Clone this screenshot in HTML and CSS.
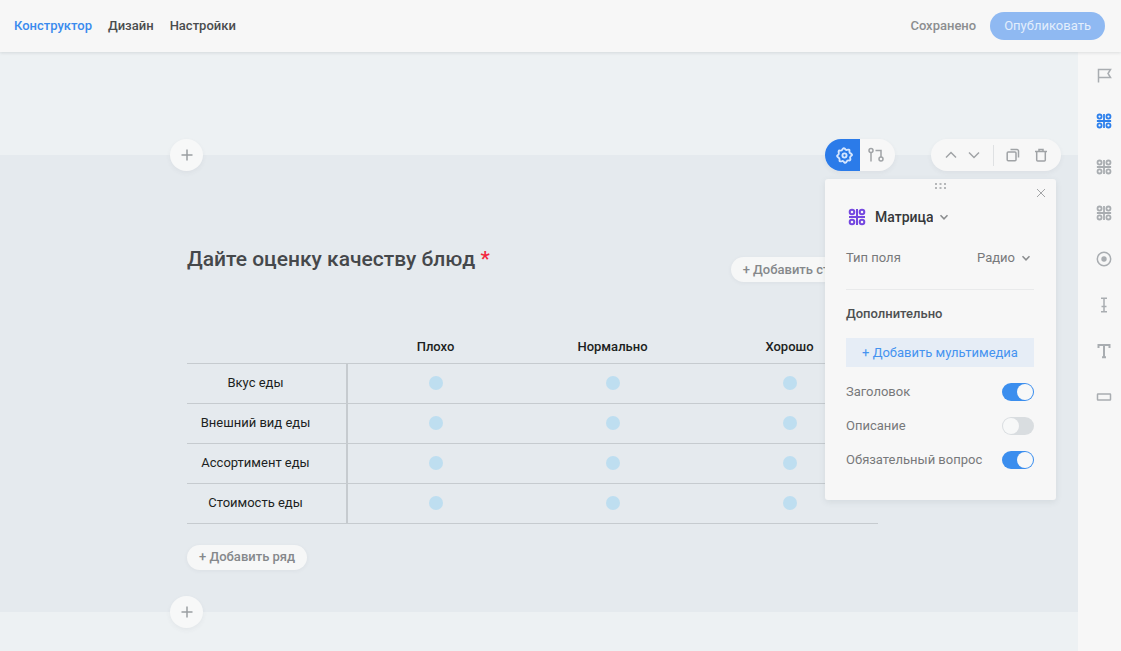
FILE: index.html
```html
<!DOCTYPE html>
<html lang="ru">
<head>
<meta charset="utf-8">
<meta name="viewport" content="width=device-width, initial-scale=1">
<title>Конструктор</title>
<link rel="stylesheet" href="styles.css">
</head>
<body>
<svg class="sprite" aria-hidden="true">
  <symbol id="matrix" viewBox="0 0 18 18">
    <path d="M9 1v16M1 9h16"/>
    <circle cx="4" cy="4" r="2.3"/><circle cx="14" cy="4" r="2.3"/>
    <circle cx="4" cy="14" r="2.3"/><circle cx="14" cy="14" r="2.3"/>
  </symbol>
  <symbol id="chevron" viewBox="0 0 10 10"><path d="M1.5 3.2 5 6.8l3.5-3.6"/></symbol>
  <symbol id="plus" viewBox="0 0 12 12"><path d="M6 .5v11M.5 6h11"/></symbol>
</svg>
<div class="app">
  <header class="topbar">
    <nav class="tabs">
      <a class="tab tab-active" href="#builder">Конструктор</a>
      <a class="tab" href="#design">Дизайн</a>
      <a class="tab" href="#settings">Настройки</a>
    </nav>
    <span class="status">Сохранено</span>
    <button class="publish" type="button">Опубликовать</button>
  </header>
  <div class="workspace">
    <main class="canvas">
      <section class="question">
        <button class="insert insert-before" type="button" aria-label="Добавить блок выше"><svg class="icon-plus"><use href="#plus"/></svg></button>
        <div class="question-head">
          <h1 class="question-title">Дайте оценку качеству блюд <span class="required">*</span></h1>
          <button class="pill" type="button">+ Добавить столбец</button>
        </div>
        <table class="matrix">
          <thead>
            <tr><td class="corner"></td><th scope="col">Плохо</th><th scope="col">Нормально</th><th scope="col">Хорошо</th></tr>
          </thead>
          <tbody>
            <tr><th scope="row">Вкус еды</th><td><input type="radio" name="taste" aria-label="Вкус еды: плохо"></td><td><input type="radio" name="taste" aria-label="Вкус еды: нормально"></td><td><input type="radio" name="taste" aria-label="Вкус еды: хорошо"></td></tr>
            <tr><th scope="row">Внешний вид еды</th><td><input type="radio" name="look" aria-label="Внешний вид еды: плохо"></td><td><input type="radio" name="look" aria-label="Внешний вид еды: нормально"></td><td><input type="radio" name="look" aria-label="Внешний вид еды: хорошо"></td></tr>
            <tr><th scope="row">Ассортимент еды</th><td><input type="radio" name="range" aria-label="Ассортимент еды: плохо"></td><td><input type="radio" name="range" aria-label="Ассортимент еды: нормально"></td><td><input type="radio" name="range" aria-label="Ассортимент еды: хорошо"></td></tr>
            <tr><th scope="row">Стоимость еды</th><td><input type="radio" name="price" aria-label="Стоимость еды: плохо"></td><td><input type="radio" name="price" aria-label="Стоимость еды: нормально"></td><td><input type="radio" name="price" aria-label="Стоимость еды: хорошо"></td></tr>
          </tbody>
        </table>
        <button class="pill" type="button">+ Добавить ряд</button>
        <button class="insert insert-after" type="button" aria-label="Добавить блок ниже"><svg class="icon-plus"><use href="#plus"/></svg></button>

        <div class="toolbar mode-bar">
          <button class="mode mode-active" type="button" aria-label="Параметры">
            <svg class="icon-gear" viewBox="0 0 18 18"><path d="M9 1.500Q10.500 3.500 11.500 3Q14.300 2.300 14.300 3.700Q14 6 15 6.500Q17.800 8 16.500 9Q14.500 10.500 15 11.500Q15.700 14.300 14.300 14.300Q12 14 11.500 15Q10 17.500 9 16.500Q7.500 14.500 6.500 15Q3.700 15.700 3.700 14.300Q4 12 3 11.500Q.5 10 1.500 9Q3.500 7.500 3 6.500Q2.300 3.700 3.700 3.700Q6 4 6.500 3Q8 .5 9 1.500Z"/><circle cx="9" cy="9" r="2.200"/></svg>
          </button>
          <button class="mode" type="button" aria-label="Логика">
            <svg class="icon-branch" viewBox="0 0 16 16"><circle cx="3" cy="3.500" r="2"/><path d="M3 5.500V14.500M7.500 3.500h5.500V10"/><circle cx="13" cy="12" r="2"/></svg>
          </button>
        </div>
        <div class="toolbar action-bar">
          <button class="action" type="button" aria-label="Вверх"><svg class="icon-arrow" viewBox="0 0 12 12"><path d="M1 8.500l5-5 5 5"/></svg></button>
          <button class="action" type="button" aria-label="Вниз"><svg class="icon-arrow" viewBox="0 0 12 12"><path d="M1 3.500l5 5 5-5"/></svg></button>
          <span class="separator"></span>
          <button class="action action-wide" type="button" aria-label="Копировать"><svg class="icon-action" viewBox="0 0 14 14"><rect x="1.200" y="4" width="8.800" height="8.800" rx="1"/><path d="M4.500 1.500H11a1.500 1.500 0 0 1 1.500 1.500v6.500"/></svg></button>
          <button class="action action-wide" type="button" aria-label="Удалить"><svg class="icon-action" viewBox="0 0 14 14"><path d="M1 3.500h12M5 3.500v-2h4v2M2.700 3.500V12a1 1 0 0 0 1 1h6.600a1 1 0 0 0 1-1V3.500"/></svg></button>
        </div>

        <aside class="panel">
          <button class="grip" type="button" aria-label="Переместить панель"><svg class="icon-grip" viewBox="0 0 11 6"><path d="M0 0h2v2H0zM4.500 0h2v2h-2zM9 0h2v2H9zM0 4h2v2H0zM4.500 4h2v2h-2zM9 4h2v2H9z"/></svg></button>
          <button class="close" type="button" aria-label="Закрыть"><svg class="icon-close" viewBox="0 0 10 10"><path d="M1 1l8 8M9 1 1 9"/></svg></button>
          <div class="kind">
            <svg class="icon-kind"><use href="#matrix"/></svg>
            <select class="select kind-select" aria-label="Тип вопроса"><option>Матрица</option></select>
            <svg class="chevron"><use href="#chevron"/></svg>
          </div>
          <div class="field">
            <label class="field-label" for="field-type">Тип поля</label>
            <select class="select" id="field-type"><option>Радио</option></select>
            <svg class="chevron"><use href="#chevron"/></svg>
          </div>
          <hr class="rule">
          <h2 class="panel-title">Дополнительно</h2>
          <button class="media" type="button">+ Добавить мультимедиа</button>
          <div class="switches">
            <label class="switch-row">Заголовок<input class="switch" type="checkbox" role="switch" checked></label>
            <label class="switch-row">Описание<input class="switch" type="checkbox" role="switch"></label>
            <label class="switch-row">Обязательный вопрос<input class="switch" type="checkbox" role="switch" checked></label>
          </div>
        </aside>
      </section>
    </main>
    <nav class="rail" aria-label="Поля">
      <button class="rail-item" type="button" aria-label="Приветствие"><svg class="icon-rail" viewBox="0 0 16 16"><path d="M2.500 15.500v-13h12l-2.500 4 2.500 4h-12"/></svg></button>
      <button class="rail-item rail-active" type="button" aria-label="Матрица"><svg class="icon-rail icon-heavy"><use href="#matrix"/></svg></button>
      <button class="rail-item" type="button" aria-label="Матрица 2"><svg class="icon-rail icon-heavy"><use href="#matrix"/></svg></button>
      <button class="rail-item" type="button" aria-label="Матрица 3"><svg class="icon-rail icon-heavy"><use href="#matrix"/></svg></button>
      <button class="rail-item" type="button" aria-label="Выбор"><svg class="icon-rail" viewBox="0 0 16 16"><circle cx="8" cy="8" r="6.700"/><circle class="dot" cx="8" cy="8" r="2.700"/></svg></button>
      <button class="rail-item" type="button" aria-label="Строка"><svg class="icon-rail" viewBox="0 0 16 16"><path d="M5 1.200h6M5 14.800h6M8 1v14M5.500 9.500h5"/></svg></button>
      <button class="rail-item" type="button" aria-label="Текст"><svg class="icon-rail icon-heavy" viewBox="0 0 16 16"><path d="M2.500 5v-3h11v3M8 2v12.500M6 14.200h4"/></svg></button>
      <button class="rail-item" type="button" aria-label="Кнопка"><svg class="icon-rail" viewBox="0 0 16 16"><rect x="1.500" y="5" width="13" height="6" rx=".5"/></svg></button>
    </nav>
  </div>
</div>
</body>
</html>
```
FILE: styles.css
```css
* { box-sizing: border-box; }

body {
  margin: 0;
  background: #edf1f3;
  color: #45484b;
  font: 13px/16px Roboto, "Open Sans", sans-serif;
}

button, input, select {
  margin: 0;
  padding: 0;
  border: 0;
  background: none;
  color: inherit;
  font: inherit;
}

button, select, input { cursor: pointer; }

svg {
  display: block;
  fill: none;
  stroke: currentColor;
  stroke-width: 1.5;
}

.sprite {
  position: absolute;
  width: 0;
  height: 0;
}

.app {
  display: flex;
  flex-direction: column;
  min-height: 100vh;
}

.topbar {
  position: relative;
  z-index: 1;
  display: flex;
  align-items: center;
  height: 52px;
  padding: 0 16px 0 14px;
  background: #f7f7f7;
  box-shadow: 0 1px 3px rgba(60, 70, 80, .14);
  font-weight: 500;
}

.tabs {
  display: flex;
  flex: 1;
  gap: 16px;
}

.tab {
  color: #4a4c4e;
  text-decoration: none;
}

.tab-active { color: #3a8bee; }

.status {
  margin-right: 14px;
  color: #8c8e90;
}

.publish {
  height: 28px;
  padding: 0 14px;
  border-radius: 14px;
  background: #8fb9f2;
  color: #e3eefc;
  font-weight: 400;
}

.workspace {
  display: flex;
  flex: 1;
}

.canvas {
  flex: 1;
  padding: 103px 0 39px;
}

.question {
  position: relative;
  padding: 90px 200px 42px 187px;
  background: #e5eaee;
}

.insert {
  position: absolute;
  left: 170px;
  display: grid;
  place-items: center;
  width: 33px;
  height: 32px;
  border-radius: 50%;
  background: #f7f8f8;
  box-shadow: 0 2px 5px rgba(60, 70, 80, .06);
  color: #9b9ea1;
}

.insert-before { top: -16px; }

.insert-after { bottom: -16px; }

.icon-plus {
  width: 12px;
  height: 12px;
}

.question-head {
  display: flex;
  justify-content: space-between;
  align-items: flex-start;
  margin-bottom: 49px;
}

.question-title {
  margin: 0;
  font-size: 21px;
  font-weight: 500;
  line-height: 28px;
}

.required { color: #f3273f; }

.pill {
  height: 25px;
  padding: 0 12px;
  border-radius: 13px;
  background: #f6f7f7;
  box-shadow: 0 1px 4px rgba(60, 70, 80, .06);
  color: #85888b;
  font-weight: 500;
}

.question-head .pill { margin-top: 12px; }

.matrix {
  width: 100%;
  margin-bottom: 21px;
  border-collapse: collapse;
  table-layout: fixed;
  color: #1c1f22;
  text-align: center;
}

.matrix th,
.matrix td {
  height: 40px;
  padding: 0;
}

.matrix thead th,
.matrix thead td {
  height: 32px;
  font-weight: 500;
}

.matrix .corner { width: 160px; }

.matrix tbody tr {
  border-top: 1px solid #c6cbcf;
  border-bottom: 1px solid #c6cbcf;
}

.matrix tbody th {
  padding-right: 22px;
  border-right: 2px solid #c6cbcf;
  font-weight: 400;
}

.matrix input {
  display: block;
  width: 14px;
  height: 14px;
  margin: 0 auto;
  border-radius: 50%;
  background: #bedef0;
  appearance: none;
}

.matrix input:checked { background: #3a8bee; }

.toolbar {
  position: absolute;
  top: -16px;
  display: flex;
  align-items: center;
  height: 32px;
  border-radius: 16px;
  background: #f7f7f7;
  box-shadow: 0 2px 5px rgba(60, 70, 80, .06);
  color: #a0a3a6;
}

.mode-bar {
  right: 183px;
  overflow: hidden;
}

.mode {
  display: grid;
  place-items: center;
  width: 35px;
  height: 32px;
  padding-right: 4px;
}

.mode-active {
  padding: 0 0 0 4px;
  background: #2b7be9;
  color: #d5e6ff;
}

.icon-gear {
  width: 17px;
  height: 17px;
  stroke-width: 2;
}

.icon-branch {
  width: 16px;
  height: 16px;
}

.action-bar {
  right: 17px;
  padding: 0 6px 0 8px;
}

.action {
  display: grid;
  place-items: center;
  width: 23px;
  height: 32px;
}

.action-wide { width: 28px; }

.icon-arrow {
  width: 12px;
  height: 12px;
}

.icon-action {
  width: 14px;
  height: 14px;
}

.separator {
  width: 1px;
  height: 21px;
  margin: 0 5px 0 8px;
  background: #dfe1e3;
}

.panel {
  position: absolute;
  top: 24px;
  right: 22px;
  width: 231px;
  padding: 28px 22px 30px 21px;
  border-radius: 3px;
  background: #f7f7f7;
  box-shadow: 0 2px 6px rgba(60, 80, 90, .1);
  color: #77797b;
}

.grip {
  position: absolute;
  top: 4px;
  left: 110px;
}

.icon-grip {
  width: 11px;
  height: 6px;
  fill: #b5b7b9;
  stroke: none;
}

.close {
  position: absolute;
  top: 9px;
  right: 10px;
  color: #a3a5a7;
}

.icon-close {
  width: 10px;
  height: 10px;
  stroke-width: 1;
}

.kind,
.field {
  display: flex;
  align-items: center;
}

.kind {
  height: 20px;
  margin-bottom: 23px;
  padding-left: 2px;
  color: #36383a;
}

.icon-kind {
  width: 18px;
  height: 18px;
  margin-right: 9px;
  color: #7548e0;
  stroke-width: 2;
}

.select {
  appearance: none;
  field-sizing: content;
}

.kind-select {
  font-size: 14px;
  font-weight: 500;
}

.chevron {
  width: 10px;
  height: 10px;
  margin: 0 3px 0 6px;
  color: #8b8d8f;
}

.field-label { flex: 1; }

.rule {
  margin: 23px 0 16px;
  border: 0;
  border-top: 1px solid #e9eaeb;
}

.panel-title {
  margin: 0 0 16px;
  color: #4e5052;
  font-size: 13px;
  font-weight: 500;
}

.media {
  width: 100%;
  height: 29px;
  margin-bottom: 15px;
  background: #e6edf6;
  color: #4593f0;
}

.switches {
  display: grid;
  gap: 14px;
}

.switch-row {
  display: flex;
  align-items: center;
  justify-content: space-between;
  height: 20px;
}

.switch {
  display: flex;
  width: 32px;
  height: 18px;
  padding: 1px;
  border-radius: 9px;
  background: #d9dde0;
  appearance: none;
}

.switch::before {
  width: 16px;
  height: 16px;
  border-radius: 50%;
  background: #f7f8f8;
  content: "";
}

.switch:checked {
  justify-content: flex-end;
  background: #3b8eee;
}

.rail {
  display: flex;
  flex-direction: column;
  gap: 14px;
  width: 43px;
  padding: 7px 0;
  background: #f7f7f7;
  color: #a9adb1;
}

.rail-item {
  display: grid;
  place-items: center;
  height: 32px;
  padding-left: 9px;
}

.rail-active { color: #2d80ec; }

.icon-rail {
  width: 16px;
  height: 16px;
}

.icon-heavy { stroke-width: 2; }

.dot {
  fill: currentColor;
  stroke: none;
}
```
